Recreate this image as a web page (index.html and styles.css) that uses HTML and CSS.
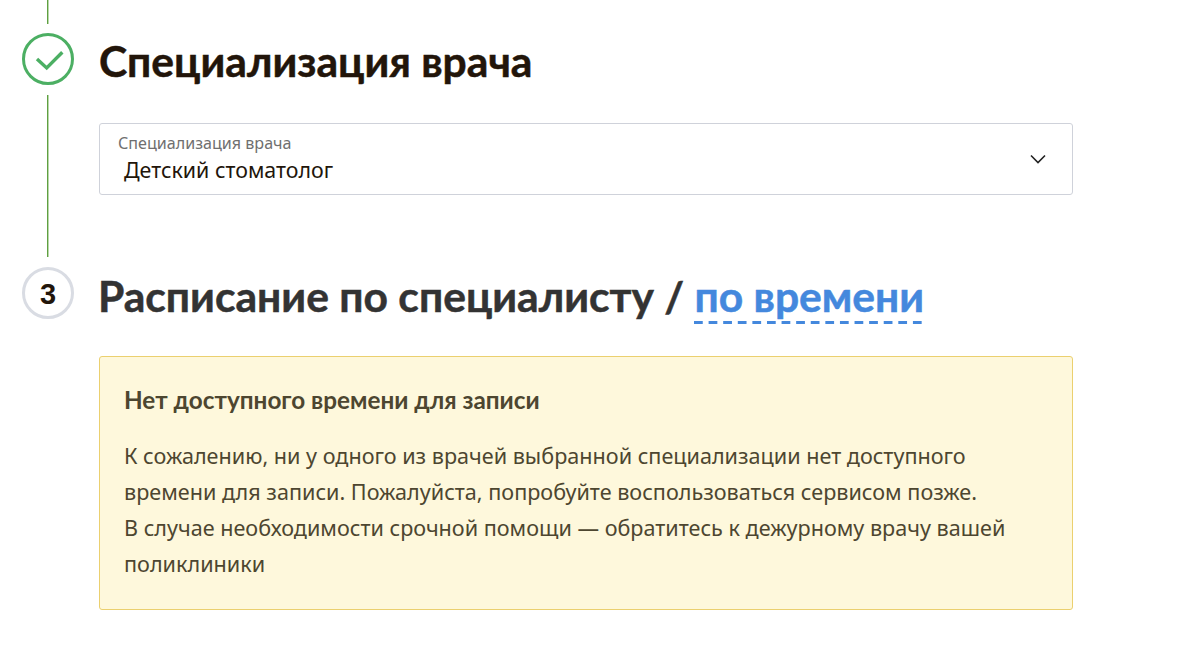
FILE: index.html
```html
<!DOCTYPE html>
<html lang="en">
<head>
  <meta charset="UTF-8" />
  <title>Запись к врачу</title>
  <link rel="stylesheet" href="styles.css">
</head>
<body>

  <div class="step step-done">
    <div class="rail">
      <div class="line line-top"></div>
      <div class="circle circle-done">
        <svg width="32" height="24" viewBox="0 0 32 24"><path d="M5 12 L14.7 21 L30.3 5.3" fill="none" stroke="#4caf63" stroke-width="3.4"/></svg>
      </div>
      <div class="line line-bottom"></div>
    </div>
    <div class="content">
      <h2 class="title title-done">Специализация врача</h2>
      <div class="select">
        <div class="select-text">
          <span class="select-label">Специализация врача</span>
          <span class="select-value">Детский стоматолог</span>
        </div>
        <svg class="chevron" width="16" height="10" viewBox="0 0 16 10"><path d="M1 1.5 L8 8.5 L15 1.5" fill="none" stroke="#222" stroke-width="1.6"/></svg>
      </div>
    </div>
  </div>

  <div class="step">
    <div class="rail">
      <div class="circle circle-num">3</div>
    </div>
    <div class="content">
      <h2 class="title title-next">Расписание по специалисту / <a href="#" class="switch">по времени</a></h2>
      <div class="notice">
        <h3>Нет доступного времени для записи</h3>
        <p>К сожалению, ни у одного из врачей выбранной специализации нет доступного времени для записи. Пожалуйста, попробуйте воспользоваться сервисом позже.<br>В случае необходимости срочной помощи — обратитесь к дежурному врачу вашей поликлиники</p>
      </div>
    </div>
  </div>

</body>
</html>
```

FILE: styles.css
```css
body {
  margin: 0;
  background-color: #ffffff;
  font-family: 'Noto Sans', sans-serif;
}

.step {
  display: flex;
}

.rail {
  width: 96px;
  margin-right: 3px;
  flex-shrink: 0;
  display: flex;
  flex-direction: column;
  align-items: center;
}

.line {
  width: 2px;
  margin-left: -1px;
  background: linear-gradient(to right, #5f9f42 50%, #b9d8aa 50%);
}

.line-top {
  height: 24px;
  margin-bottom: 9px;
}

.line-bottom {
  height: 162px;
  margin-top: 10px;
  margin-bottom: 10px;
}

.circle {
  width: 52px;
  height: 52px;
  box-sizing: border-box;
  border-radius: 50%;
  display: flex;
  align-items: center;
  justify-content: center;
}

.circle-done {
  border: 3px solid #4caf63;
}

.circle-num {
  border: 3px solid #d9dce3;
  padding-top: 2px;
  font-family: 'Liberation Sans', sans-serif;
  font-size: 29px;
  font-weight: 700;
  color: #22150a;
}

.content {
  width: 974px;
}

.title {
  margin: 0;
  font-family: 'Lato', sans-serif;
  font-size: 42.6px;
  font-weight: 700;
  line-height: 48px;
  color: #333333;
  -webkit-text-stroke: 0.5px currentColor;
}

.title-done {
  padding-top: 37px;
  margin-bottom: 38px;
  color: #22150a;
}

.title-next {
  padding-top: 5px;
  margin-left: -1px;
}

.switch {
  color: #4488dd;
  text-decoration: none;
  padding-bottom: 3px;
  background-image: linear-gradient(to right, #4488dd 60%, transparent 60%);
  background-size: 14.6px 3px;
  background-repeat: repeat-x;
  background-position: left bottom;
}

.select {
  height: 72px;
  box-sizing: border-box;
  border: 1px solid #cfd2da;
  border-radius: 3px;
  padding: 0 26px 0 18px;
  display: flex;
  align-items: center;
  justify-content: space-between;
}

.select-text {
  display: flex;
  flex-direction: column;
}

.select-label {
  font-size: 16.1px;
  line-height: 20px;
  color: #6f6f6f;
}

.select-value {
  padding-left: 6px;
  font-size: 21.4px;
  line-height: 33px;
  color: #22150a;
}

.notice {
  margin-top: 36px;
  height: 254px;
  box-sizing: border-box;
  border: 1px solid #ebd06f;
  border-radius: 3px;
  background-color: #fef8dc;
  padding: 27px 24px;
  color: #4d4630;
}

.notice h3 {
  margin: 0 0 22px;
  font-family: 'Lato', sans-serif;
  font-size: 24.3px;
  font-weight: 700;
  line-height: 32px;
}

.notice p {
  margin: 0;
  font-size: 21.6px;
  line-height: 36px;
}
```
